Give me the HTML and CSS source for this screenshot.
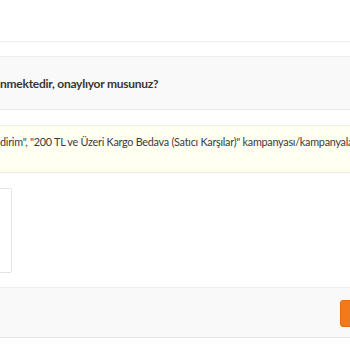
FILE: index.html
```html
<!DOCTYPE html>
<html lang="tr">
<head>
<meta charset="utf-8">
<link rel="stylesheet" href="styles.css">
</head>
<body>
<div class="modal">
  <div class="modal-header"></div>
  <div class="modal-body">
    <div class="question">nmektedir, onaylıyor musunuz?</div>
    <div class="warning">dirim", "200 TL ve Üzeri Kargo Bedava (Satıcı Karşılar)" kampanyası/kampanyala</div>
    <div class="row">
      <div class="card"></div>
    </div>
  </div>
  <div class="modal-footer">
    <button class="btn-primary" aria-label="Onayla"></button>
  </div>
</div>
</body>
</html>
```
FILE: styles.css
```css
html, body {
  margin: 0;
  padding: 0;
  background: #ffffff;
}
body {
  font-family: "Lato", "Noto Sans", sans-serif;
  color: #333333;
  overflow: hidden;
  width: 350px;
  height: 350px;
}
.modal {
  width: 350px;
  overflow: hidden;
}
.modal-header {
  height: 41px;
  border-bottom: 1px solid #ececec;
}
.modal-body {
  padding-top: 14px;
  display: flex;
  flex-direction: column;
  gap: 15px;
}
.question {
  height: 52px;
  background: #f9f9f9;
  border-top: 1px solid #eeeeee;
  border-bottom: 1px solid #eaeaea;
  display: flex;
  align-items: center;
  font-weight: 700;
  font-size: 12px;
  letter-spacing: -0.25px;
  white-space: nowrap;
  color: #363636;
}
.warning {
  box-sizing: content-box;
  background: #fffff2;
  border-top: 1px solid #efefdc;
  border-bottom: 1px solid #eeeedd;
  padding-top: 8px;
  height: 38px;
  font-size: 10.8px;
  letter-spacing: -0.25px;
  line-height: 16px;
  white-space: nowrap;
  overflow: hidden;
  color: #3a3a3a;
}
.row {
  display: flex;
}
.card {
  width: 11px;
  height: 83px;
  border: 1px solid #e3e3e3;
  border-left: none;
  border-radius: 0 2px 2px 0;
}
.modal-footer {
  margin-top: 14px;
  height: 49px;
  background: #f9f9f9;
  border-top: 1px solid #eeeeee;
  border-bottom: 1px solid #e6e6e6;
  display: flex;
  align-items: center;
  padding-left: 340px;
  box-sizing: content-box;
}
.btn-primary {
  flex: none;
  height: 27px;
  width: 90px;
  margin-top: 1px;
  background: #f27a1a;
  border: 1px solid #e06e12;
  border-radius: 3px;
}
```
